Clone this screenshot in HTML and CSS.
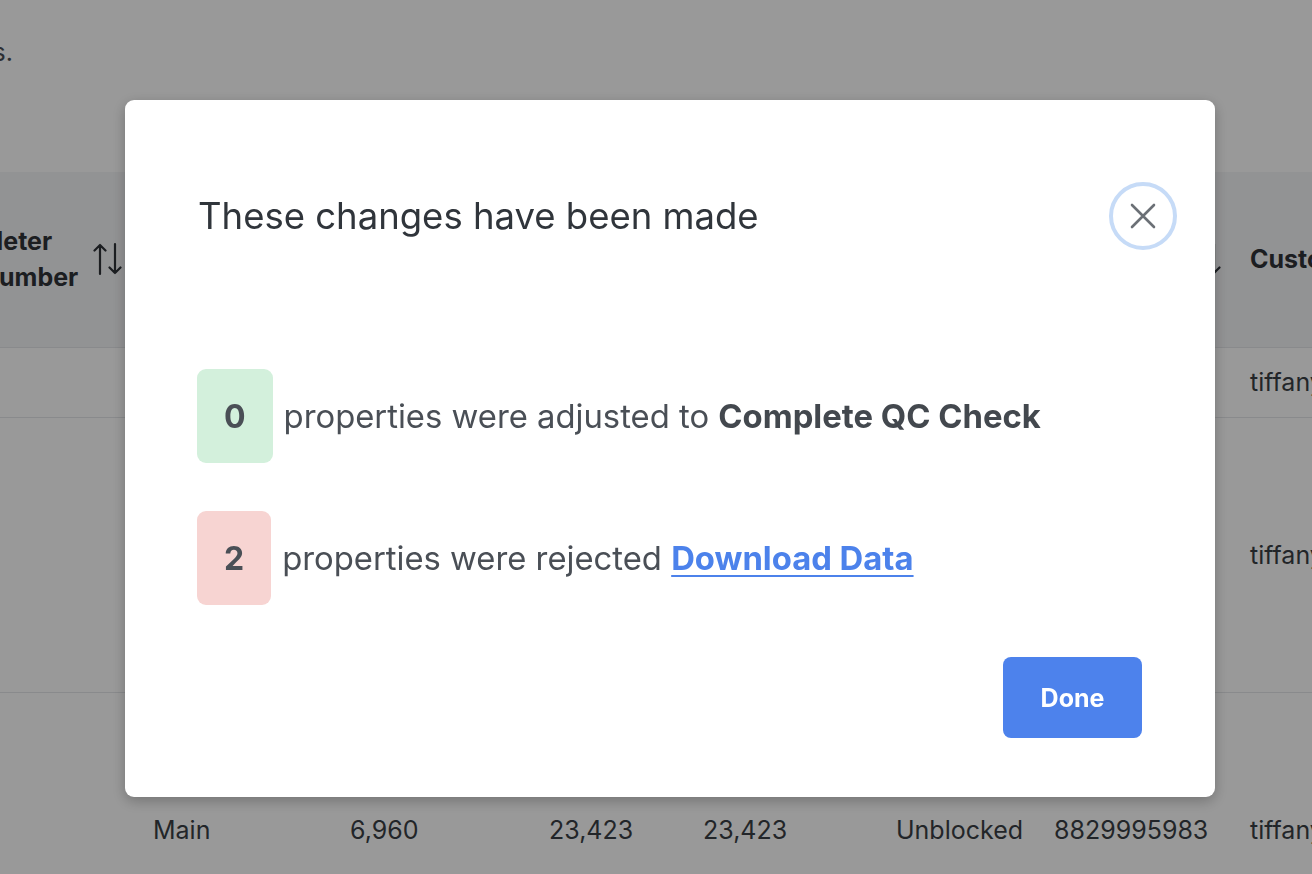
FILE: index.html
```html
<!DOCTYPE html>
<html lang="en">
<head>
<meta charset="utf-8">
<title>These changes have been made</title>
<link rel="stylesheet" href="styles.css">
</head>
<body>
<div class="page">
  <div class="intro"><span>Select the properties to update their status and review all results as shown below for these properties.</span></div>
  <div class="table-wrap">
    <table class="data">
      <thead>
        <tr>
          <th class="c-a"><div class="th-in"><span>Meter<br>Number</span>
            <svg class="sort" width="30" height="34" viewBox="0 0 30 34"><path d="M7 3V32M1.5 8.5L7 3L12.5 8.5M22 2V31M16.5 25.5L22 31L27.5 25.5" stroke="#2f3338" stroke-width="2.2" stroke-linecap="round" stroke-linejoin="round" fill="none"/></svg>
          </div></th>
          <th class="c-b"><div class="th-in"><span>Account</span></div></th>
          <th class="c-c"><div class="th-in"><span>Usage</span></div></th>
          <th class="c-d"><div class="th-in"><span>Billed</span></div></th>
          <th class="c-e"><div class="th-in"><span>Total</span></div></th>
          <th class="c-f"><div class="th-in"><span>Status</span></div></th>
          <th class="c-g"><div class="th-in"><span>Contact<br>Number</span>
            <svg class="sort sort-end" width="30" height="34" viewBox="0 0 30 34"><path d="M7 3V32M1.5 8.5L7 3L12.5 8.5M22 2V31M16.5 25.5L22 31L27.5 25.5" stroke="#2f3338" stroke-width="2.2" stroke-linecap="round" stroke-linejoin="round" fill="none"/></svg>
          </div></th>
          <th class="c-h"><div class="th-in"><span>Customer</span></div></th>
        </tr>
      </thead>
      <tbody>
        <tr class="r1">
          <td></td><td></td><td></td><td></td><td></td><td></td><td></td><td>tiffany</td>
        </tr>
        <tr class="r2">
          <td></td><td></td><td></td><td></td><td></td><td></td><td></td><td>tiffany</td>
        </tr>
        <tr class="r3">
          <td></td><td>Main</td><td>6,960</td><td>23,423</td><td>23,423</td><td>Unblocked</td><td>8829995983</td><td>tiffany</td>
        </tr>
      </tbody>
    </table>
  </div>
</div>

<div class="overlay">
  <div class="modal" role="dialog" aria-labelledby="mtitle">
    <div class="modal-head">
      <h2 id="mtitle" class="modal-title">These changes have been made</h2>
      <button class="close" aria-label="Close">
        <svg width="26" height="26" viewBox="0 0 26 26"><path d="M2 2L24 24M24 2L2 24" stroke="#6b7076" stroke-width="2.6" stroke-linecap="round" fill="none"/></svg>
      </button>
    </div>
    <div class="modal-body">
      <div class="result">
        <span class="badge badge-ok">0</span>
        <span class="result-text">properties were adjusted to <strong>Complete QC Check</strong></span>
      </div>
      <div class="result">
        <span class="badge badge-bad">2</span>
        <span class="result-text">properties were rejected <a href="#" class="link">Download Data</a></span>
      </div>
    </div>
    <div class="modal-foot">
      <button class="done">Done</button>
    </div>
  </div>
</div>
</body>
</html>
```

FILE: styles.css
```css
* { box-sizing: border-box; }
html, body {
  margin: 0;
  padding: 0;
  width: 1312px;
  height: 874px;
  overflow: hidden;
  background: #fff;
  font-family: Inter, "Liberation Sans", sans-serif;
  color: #3a3f45;
}
.page {
  width: 1312px;
  height: 874px;
  overflow: hidden;
}
.intro {
  height: 172px;
  width: 13px;
  display: flex;
  justify-content: flex-end;
  padding-top: 36px;
  white-space: nowrap;
  font-size: 25px;
  line-height: 32px;
  color: #4a4f55;
}
.table-wrap {
  margin-left: -40px;
}
.data {
  border-collapse: collapse;
  table-layout: fixed;
  width: 1500px;
  font-size: 25px;
  color: #3a3f45;
}
.data th, .data td {
  text-align: left;
  padding: 0 0 0 20px;
  border-bottom: 1px solid #e4e6e9;
  white-space: nowrap;
  overflow: hidden;
}
.data thead tr { height: 175px; background: #f4f5f7; }
.data th { font-weight: 700; line-height: 36px; color: #2f3338; }
.th-in { display: flex; align-items: center; gap: 15px; }
.sort { flex: none; display: block; }
.sort-end { margin-left: auto; }
.c-a { width: 173px; }
.c-b { width: 197px; }
.c-c { width: 199px; }
.c-d { width: 154px; }
.c-e { width: 193px; }
.c-f { width: 158px; }
.data th.c-g { width: 196px; padding-right: 8px; }
.c-h { width: 230px; }
.r1 { height: 70px; }
.r2 { height: 275px; }
.r3 { height: 276px; }

.overlay {
  position: fixed;
  inset: 0;
  background: rgba(0, 0, 0, 0.4);
}
.modal {
  position: absolute;
  left: 125px;
  top: 100px;
  width: 1090px;
  height: 697px;
  background: #fff;
  border-radius: 9px;
  box-shadow: 0 4px 14px rgba(0, 0, 0, 0.25);
  padding: 82px 73px 0 72px;
  display: flex;
  flex-direction: column;
}
.modal-head {
  display: flex;
  align-items: center;
  justify-content: space-between;
  padding-left: 1px;
}
.modal-title {
  margin: 0;
  font-size: 36.5px;
  font-weight: 400;
  color: #30353b;
}
.close {
  width: 68px;
  height: 68px;
  margin-right: -35px;
  border-radius: 50%;
  border: 4px solid #c6dbf7;
  background: #fff;
  display: flex;
  align-items: center;
  justify-content: center;
  padding: 0;
}
.modal-body {
  margin-top: 119px;
  display: flex;
  flex-direction: column;
  gap: 48px;
}
.result {
  display: flex;
  align-items: center;
  gap: 11px;
}
.badge {
  height: 94px;
  padding: 0 27px;
  border-radius: 9px;
  display: flex;
  align-items: center;
  justify-content: center;
  font-size: 32px;
  font-weight: 700;
  color: #4a4f56;
}
.badge-ok { background: #d3f0dc; }
.badge-bad { background: #f7d4d2; }
.result-text {
  font-size: 32.8px;
  color: #4a4f56;
}
.result-text strong { font-weight: 700; color: #43484e; }
.link {
  color: #4c82eb;
  font-weight: 700;
  text-decoration: underline;
  text-underline-offset: 5px;
  text-decoration-thickness: 2px;
}
.modal-foot {
  margin-top: 52px;
  display: flex;
  justify-content: flex-end;
}
.done {
  width: 139px;
  height: 81px;
  border: 0;
  border-radius: 8px;
  background: #4d82ec;
  color: #fff;
  font-family: Inter, "Liberation Sans", sans-serif;
  font-size: 25px;
  font-weight: 700;
}
```
